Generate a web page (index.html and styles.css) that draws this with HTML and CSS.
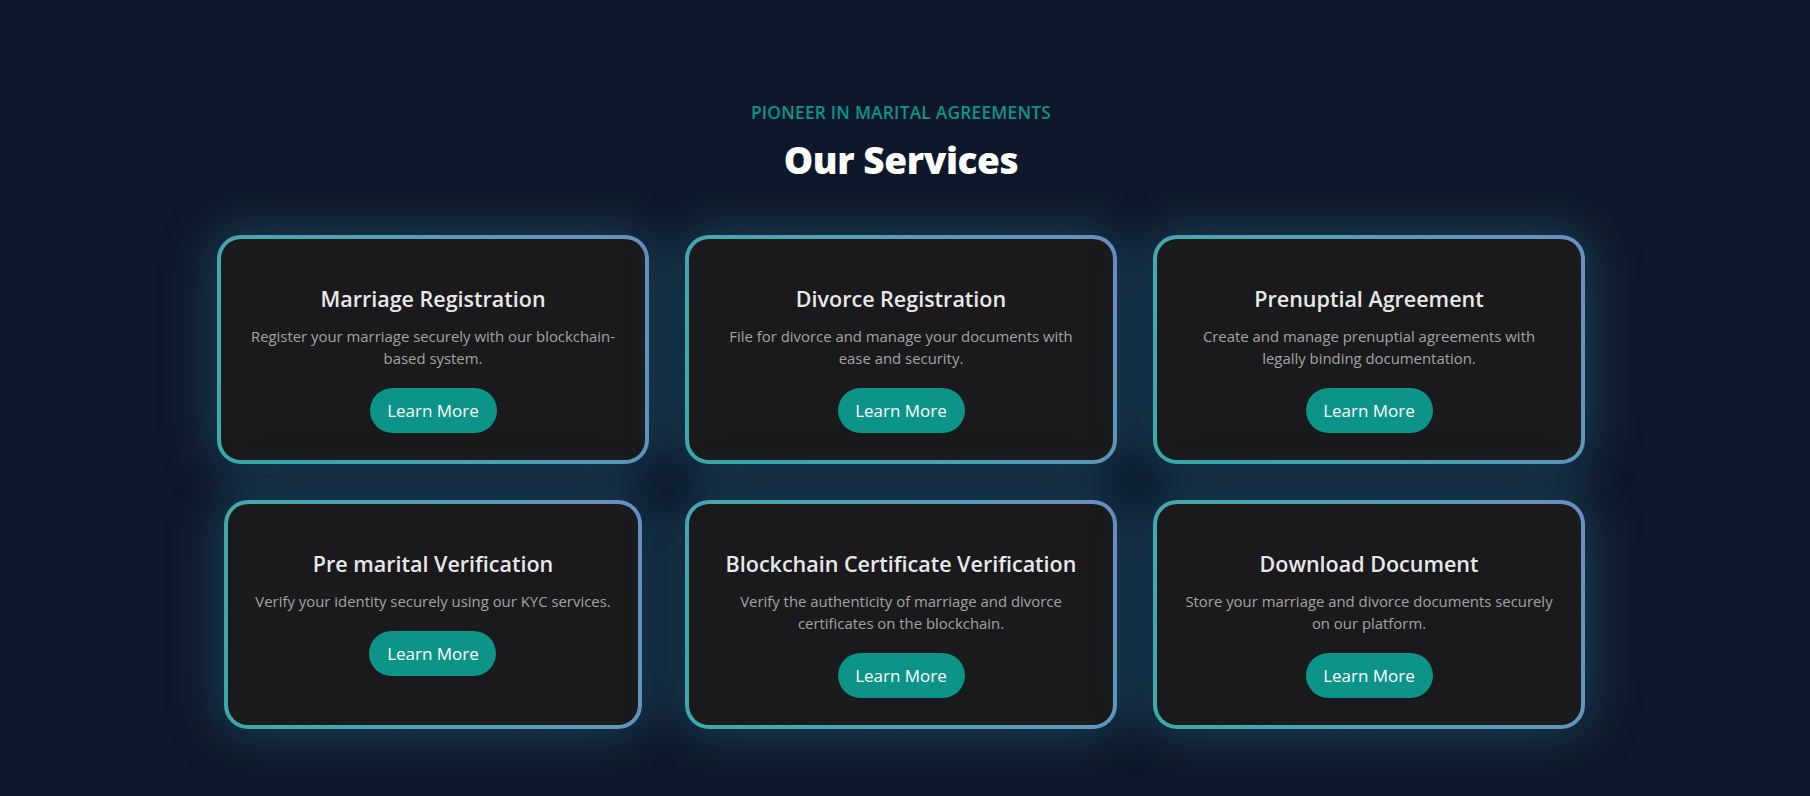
FILE: index.html
```html
<!DOCTYPE html>
<html lang="en">
<head>
<meta charset="utf-8">
<title>Our Services</title>
<link rel="stylesheet" href="styles.css">
</head>
<body>
<section class="services">
  <header class="services-head">
    <p class="eyebrow">PIONEER IN MARITAL AGREEMENTS</p>
    <h2 class="title">Our Services</h2>
  </header>
  <div class="grid">
    <article class="card">
      <h3 class="card-title">Marriage Registration</h3>
      <p class="card-text">Register your marriage securely with our blockchain-based system.</p>
      <a class="btn" href="#">Learn More</a>
    </article>
    <article class="card">
      <h3 class="card-title">Divorce Registration</h3>
      <p class="card-text">File for divorce and manage your documents with ease and security.</p>
      <a class="btn" href="#">Learn More</a>
    </article>
    <article class="card">
      <h3 class="card-title">Prenuptial Agreement</h3>
      <p class="card-text">Create and manage prenuptial agreements with legally binding documentation.</p>
      <a class="btn" href="#">Learn More</a>
    </article>
    <article class="card">
      <h3 class="card-title">Pre marital Verification</h3>
      <p class="card-text">Verify your identity securely using our KYC services.</p>
      <a class="btn" href="#">Learn More</a>
    </article>
    <article class="card">
      <h3 class="card-title">Blockchain Certificate Verification</h3>
      <p class="card-text">Verify the authenticity of marriage and divorce certificates on the blockchain.</p>
      <a class="btn" href="#">Learn More</a>
    </article>
    <article class="card">
      <h3 class="card-title">Download Document</h3>
      <p class="card-text">Store your marriage and divorce documents securely on our platform.</p>
      <a class="btn" href="#">Learn More</a>
    </article>
  </div>
</section>
</body>
</html>
```

FILE: styles.css
```css
* { box-sizing: border-box; }

html, body {
  margin: 0;
  padding: 0;
}

body {
  background: #0f172a;
  min-height: 100vh;
  font-family: "Open Sans", "Noto Sans", "Liberation Sans", sans-serif;
  color: #fff;
}

.services {
  padding: 99px 8px 60px 0;
  display: flex;
  flex-direction: column;
  align-items: center;
}

.services-head {
  text-align: center;
}

.eyebrow {
  margin: 0;
  font-size: 17.4px;
  line-height: 26px;
  font-weight: 600;
  color: #0d9488;
  letter-spacing: 0.2px;
}

.title {
  margin: 11px 0 0;
  font-size: 37px;
  line-height: 48px;
  font-weight: 800;
  color: #fff;
  letter-spacing: -0.4px;
}

.grid {
  margin-top: 51px;
  display: grid;
  grid-template-columns: repeat(3, 432px);
  gap: 36px;
  justify-items: center;
}

.card {
  display: flex;
  flex-direction: column;
  align-items: center;
  text-align: center;
  padding: 45px 27px 27px;
  border: 4px solid transparent;
  border-radius: 24px;
  background:
    linear-gradient(#1a1a1c, #1a1a1c) padding-box,
    linear-gradient(60deg, #3aaaaa 0%, #4fa3b4 45%, #6a8ec2 100%) border-box;
  box-shadow: 0 0 50px 10px rgba(40, 130, 160, 0.32);
}

.card-title {
  margin: 0;
  font-size: 21.5px;
  line-height: 30px;
  font-weight: 600;
  color: #e8e8e8;
}

.card-text {
  margin: 11px 0 0;
  font-size: 14.9px;
  line-height: 22px;
  color: #a3a3a3;
}

.btn {
  margin-top: 19px;
  display: inline-flex;
  align-items: center;
  justify-content: center;
  height: 45px;
  width: 127px;
  border-radius: 999px;
  background: #0d9488;
  color: #fff;
  text-decoration: none;
  font-size: 17px;
}
```
